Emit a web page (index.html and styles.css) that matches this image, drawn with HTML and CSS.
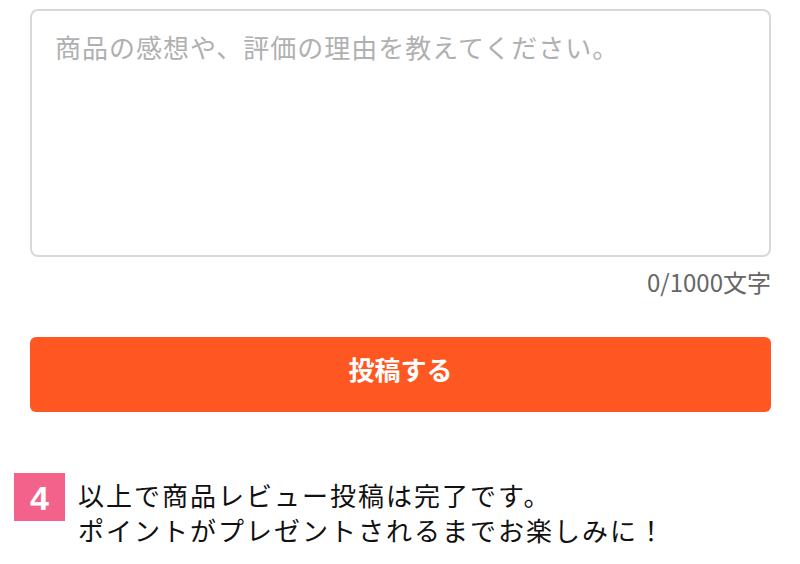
FILE: index.html
```html
<!DOCTYPE html>
<html lang="ja">
<head>
    <meta charset="UTF-8">
    <meta name="viewport" content="width=device-width, initial-scale=1.0">
    <title>商品レビュー投稿</title>
    <link rel="stylesheet" href="styles.css">
</head>
<body>
    <div class="review">
        <textarea class="review-text" placeholder="商品の感想や、評価の理由を教えてください。"></textarea>
        <p class="count">0/1000文字</p>
        <button type="button" class="submit">投稿する</button>
    </div>

    <div class="step">
        <span class="step-num">4</span>
        <p class="step-text">以上で商品レビュー投稿は完了です。<br>ポイントがプレゼントされるまでお楽しみに！</p>
    </div>
</body>
</html>
```

FILE: styles.css
```css
body {
    margin: 0;
    font-family: "Noto Sans CJK JP", "Noto Sans", sans-serif;
    background: #fff;
    color: #111;
}

.review {
    padding: 9px 29px 0 30px;
}

.review-text {
    display: block;
    box-sizing: border-box;
    width: 100%;
    height: 248px;
    padding: 16px 23px;
    border: 2px solid #d8d8d8;
    border-radius: 8px;
    font-family: inherit;
    font-size: 26px;
    line-height: 1.5;
    letter-spacing: 1px;
    resize: none;
    outline: none;
}

.review-text::placeholder {
    color: #b0b0b0;
}

.count {
    margin: 10px 0 0;
    text-align: right;
    font-size: 24px;
    line-height: 30px;
    color: #666;
}

.submit {
    display: block;
    width: 100%;
    height: 75px;
    margin-top: 40px;
    padding: 0 0 12px;
    border: none;
    border-radius: 6px;
    background: #fe5722;
    color: #fff;
    font-family: inherit;
    font-size: 26px;
    font-weight: bold;
    cursor: pointer;
}

.step {
    display: flex;
    align-items: flex-start;
    gap: 13px;
    margin-top: 61px;
    padding-left: 14px;
}

.step-num {
    flex: none;
    width: 51px;
    height: 48px;
    background: #f3628a;
    color: #fff;
    font-family: "Liberation Sans", Arial, sans-serif;
    font-size: 34px;
    font-weight: bold;
    line-height: 50px;
    text-align: center;
}

.step-text {
    margin: 4px 0 0;
    font-size: 26px;
    line-height: 35px;
    letter-spacing: 2px;
    color: #111;
}
```
